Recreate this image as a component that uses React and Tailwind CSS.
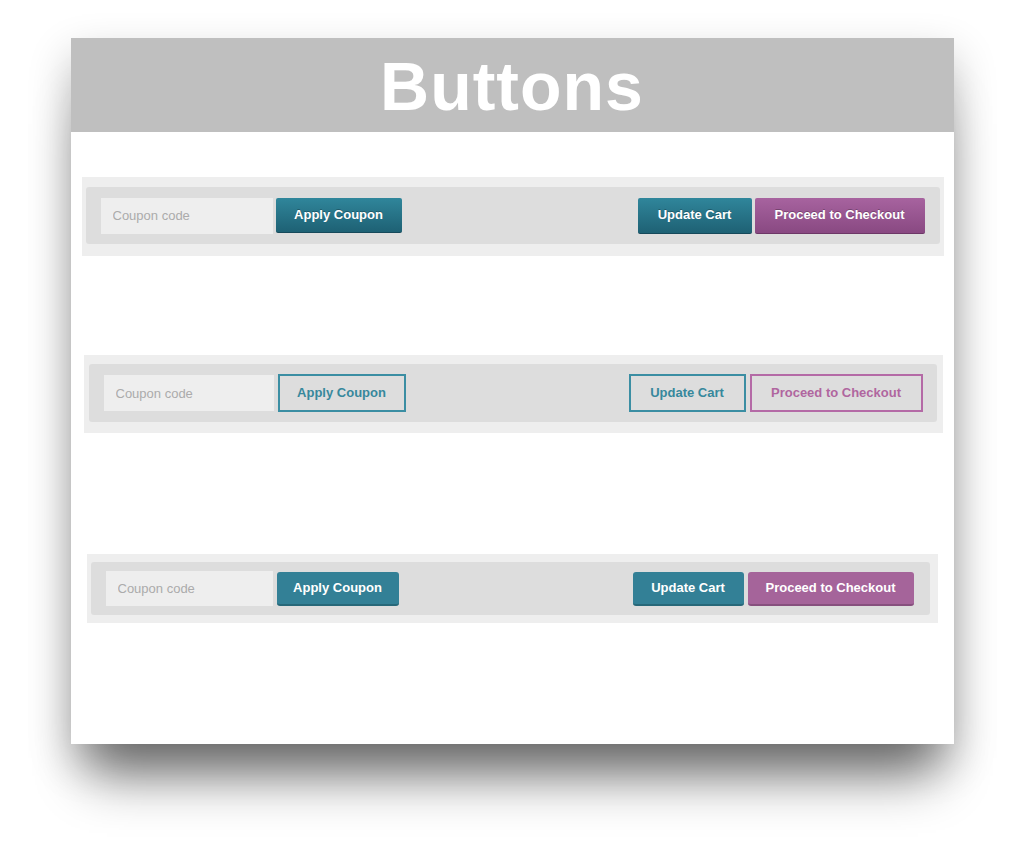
import React from 'react';

const rows = [
  {
    outer: 'mt-[45px] ml-[11px] mr-[10px] pt-[10px] pb-[12px] px-[4px]',
    inner: 'h-[57px] pl-[15px] pr-[15px]',
    input: 'w-[172px] h-[36px]',
    gap: 'gap-[3px]',
    apply: 'w-[126px] h-[35px] rounded-[2px] bg-linear-to-b from-[#30869b] to-[#1e6174] border-b border-[#16495a] text-white [text-shadow:0_-1px_0_rgba(0,0,0,0.25)]',
    update: 'w-[114px] h-[36px] rounded-[2px] bg-linear-to-b from-[#30869b] to-[#1e6174] border-b border-[#16495a] text-white [text-shadow:0_-1px_0_rgba(0,0,0,0.25)]',
    checkout: 'w-[170px] h-[36px] rounded-[2px] bg-linear-to-b from-[#a7639f] to-[#894982] border-b border-[#6d3767] text-white [text-shadow:0_-1px_0_rgba(0,0,0,0.25)]',
  },
  {
    outer: 'mt-[99px] ml-[13px] mr-[11px] pt-[9px] pb-[11px] pl-[5px] pr-[6px]',
    inner: 'h-[58px] pl-[15px] pr-[14px]',
    input: 'w-[170px] h-[36px]',
    gap: 'gap-[4px]',
    apply: 'w-[128px] h-[38px] border-2 border-[#3b8ea3] text-[#37889c]',
    update: 'w-[117px] h-[38px] border-2 border-[#3b8ea3] text-[#37889c]',
    checkout: 'w-[173px] h-[38px] border-2 border-[#b46aa6] text-[#b0669f]',
  },
  {
    outer: 'mt-[121px] ml-[16px] mr-[16px] py-[8px] pl-[4px] pr-[8px]',
    inner: 'h-[53px] pl-[15px] pr-[16px]',
    input: 'w-[167px] h-[35px]',
    gap: 'gap-[4px]',
    apply: 'w-[122px] h-[34px] rounded-[3px] bg-[#338096] border-b-2 border-[#276879] text-white',
    update: 'w-[111px] h-[34px] rounded-[3px] bg-[#338096] border-b-2 border-[#276879] text-white',
    checkout: 'w-[166px] h-[34px] rounded-[3px] bg-[#a5649a] border-b-2 border-[#87507e] text-white',
  },
];

function CartRow({ row }) {
  return (
    <div className={`bg-[#eeeeee] ${row.outer}`}>
      <div className={`flex items-center justify-between rounded-[3px] bg-[#dddddd] ${row.inner}`}>
        <div className={`flex items-center ${row.gap}`}>
          <input
            placeholder="Coupon code"
            className={`bg-[#eeeeee] px-[12px] text-[13px] text-gray-600 outline-none placeholder:text-[#ababab] ${row.input}`}
          />
          <button className={`flex items-center justify-center text-[13px] font-bold ${row.apply}`}>
            Apply Coupon
          </button>
        </div>
        <div className={`flex items-center ${row.gap}`}>
          <button className={`flex items-center justify-center text-[13px] font-bold ${row.update}`}>
            Update Cart
          </button>
          <button className={`flex items-center justify-center text-[13px] font-bold ${row.checkout}`}>
            Proceed to Checkout
          </button>
        </div>
      </div>
    </div>
  );
}

export default function App() {
  return (
    <div className="min-h-screen w-full bg-white pt-[38px] font-['Liberation_Sans',Arial,sans-serif]">
      <div className="mx-auto w-[883px] h-[706px] bg-white flex flex-col shadow-[0_50px_50px_-18px_rgba(0,0,0,0.48),0_18px_40px_rgba(0,0,0,0.24)]">
        <div className="h-[94px] bg-[#bfbfbf] flex items-center justify-center">
          <h1 className="text-white font-bold text-[68px] leading-none tracking-[1px] pt-[2px]">Buttons</h1>
        </div>
        {rows.map((row, i) => (
          <CartRow key={i} row={row} />
        ))}
      </div>
    </div>
  );
}
